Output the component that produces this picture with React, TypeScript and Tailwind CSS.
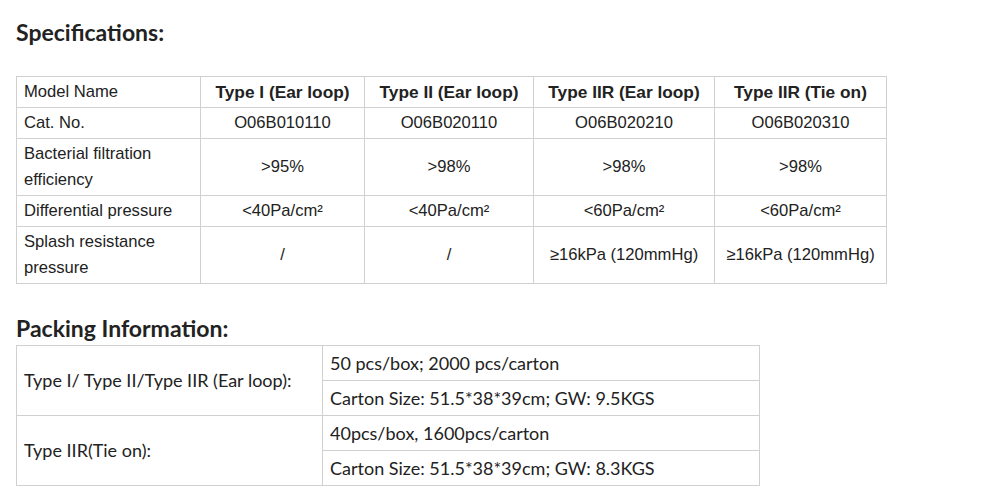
const specRows: { label: string; values: string[]; tall?: boolean }[] = [
  { label: "Cat. No.", values: ["O06B010110", "O06B020110", "O06B020210", "O06B020310"] },
  { label: "Bacterial filtration efficiency", values: [">95%", ">98%", ">98%", ">98%"], tall: true },
  { label: "Differential pressure", values: ["<40Pa/cm²", "<40Pa/cm²", "<60Pa/cm²", "<60Pa/cm²"] },
  { label: "Splash resistance pressure", values: ["/", "/", "≥16kPa (120mmHg)", "≥16kPa (120mmHg)"], tall: true },
];

const headers = ["Type I (Ear loop)", "Type II (Ear loop)", "Type IIR (Ear loop)", "Type IIR (Tie on)"];
const colWidths = ["w-[184px]", "w-[164px]", "w-[169px]", "w-[181px]", "w-[172px]"];

const packing = [
  {
    label: "Type I/ Type II/Type IIR (Ear loop):",
    lines: ["50 pcs/box; 2000 pcs/carton", "Carton Size: 51.5*38*39cm; GW: 9.5KGS"],
  },
  {
    label: "Type IIR(Tie on):",
    lines: ["40pcs/box, 1600pcs/carton", "Carton Size: 51.5*38*39cm; GW: 8.3KGS"],
  },
];

const cell = "border border-[#d0d0d0] px-[7px] py-[2px] leading-[26px]";

export default function App() {
  return (
    <div className="min-h-screen bg-white px-4 pt-[18px] text-[#222]">
      <h2 className="font-['Lato','Open_Sans',sans-serif] text-[23px] font-bold leading-[28px] text-[#222]">
        Specifications:
      </h2>

      <table className="mt-[30px] border-collapse font-['Liberation_Sans',Arial,sans-serif] text-[16.6px] text-[#222]">
        <tbody>
          <tr className="h-[31px]">
            <td className={`${cell} ${colWidths[0]}`}>Model Name</td>
            {headers.map((h, i) => (
              <td key={h} className={`${cell} ${colWidths[i + 1]} text-center text-[17.3px] font-bold whitespace-nowrap`}>
                {h}
              </td>
            ))}
          </tr>
          {specRows.map((row) => (
            <tr key={row.label} className={row.tall ? "h-[57px]" : "h-[31px]"}>
              <td className={`${cell} ${row.tall ? "pr-[20px]" : ""}`}>{row.label}</td>
              {row.values.map((v, i) => (
                <td key={i} className={`${cell} text-center whitespace-nowrap`}>
                  {v}
                </td>
              ))}
            </tr>
          ))}
        </tbody>
      </table>

      <h2 className="mt-[30px] font-['Lato','Open_Sans',sans-serif] text-[23px] font-bold leading-[28px] text-[#222]">
        Packing Information:
      </h2>

      <table className="mt-[3px] border-collapse font-['Lato','Open_Sans',sans-serif] text-[18px] text-[#222]">
        <tbody>
          {packing.map((p) =>
            p.lines.map((line, j) => (
              <tr key={p.label + j} className="h-[35px]">
                {j === 0 && (
                  <td rowSpan={2} className="w-[306px] border border-[#d0d0d0] px-[7px] align-middle whitespace-nowrap">
                    {p.label}
                  </td>
                )}
                <td className="w-[437px] border border-[#d0d0d0] px-[7px] py-0 align-middle leading-[24px] whitespace-nowrap">
                  {line}
                </td>
              </tr>
            ))
          )}
        </tbody>
      </table>
    </div>
  );
}
